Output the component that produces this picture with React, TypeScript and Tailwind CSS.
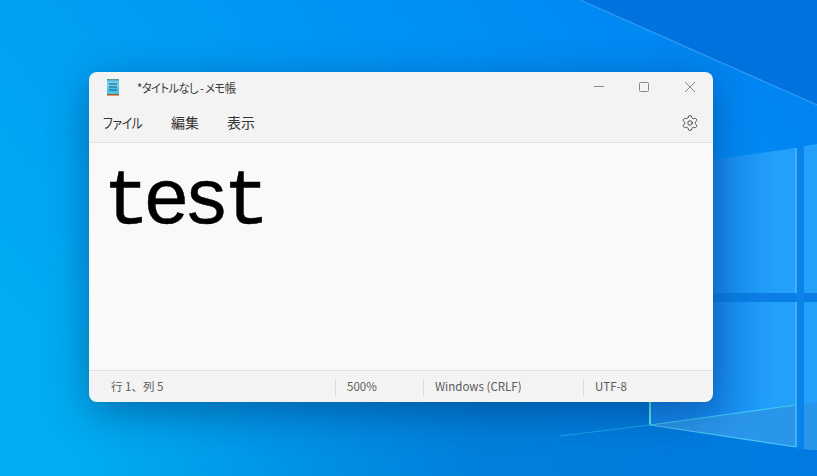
import { Settings } from "lucide-react";

const jp = "font-['Noto_Sans_CJK_JP','Noto_Sans',sans-serif]";

function Wallpaper() {
  return (
    <svg className="absolute inset-0" width="817" height="476" viewBox="0 0 817 476">
      <defs>
        <linearGradient id="bg" x1="0" y1="0.6" x2="1" y2="0.1">
          <stop offset="0" stopColor="#00acf2" />
          <stop offset="0.55" stopColor="#0094f5" />
          <stop offset="1" stopColor="#0082f2" />
        </linearGradient>
        <linearGradient id="lower" x1="0" y1="0" x2="1" y2="0">
          <stop offset="0.1" stopColor="#0078d0" stopOpacity="0" />
          <stop offset="0.6" stopColor="#0078d4" stopOpacity="0.8" />
          <stop offset="1" stopColor="#0078e0" stopOpacity="0.9" />
        </linearGradient>
        <linearGradient id="pane" gradientUnits="userSpaceOnUse" x1="713" y1="0" x2="775" y2="0">
          <stop offset="0" stopColor="#1488ee" />
          <stop offset="1" stopColor="#22a0fa" />
        </linearGradient>
      </defs>
      <rect width="817" height="476" fill="url(#bg)" />
      <polygon points="580,0 817,0 817,105" fill="#0073e0" />
      <line x1="580" y1="0" x2="817" y2="105" stroke="#2f9cf5" strokeWidth="1.2" />
      <rect y="402" width="817" height="74" fill="url(#lower)" />
      {/* window logo panes */}
      <rect x="600" y="293" width="217" height="9" fill="#0a7ee4" />
      <rect x="796" y="148" width="8" height="301" fill="#0a84ea" />
      <polygon points="600,176 796,148 796,293 600,293" fill="url(#pane)" />
      <polygon points="804,146 817,144 817,293 804,293" fill="#22a0fa" />
      <polygon points="650,302 796,302 796,447 650,425" fill="url(#pane)" />
      <polygon points="804,302 817,302 817,450 804,449" fill="#22a0fa" />
      <polygon points="650,425 796,405 796,447" fill="#2a96ea" />
      <polygon points="804,404 817,402 817,450 804,449" fill="#2a96ea" />
      <line x1="796" y1="148" x2="796" y2="293" stroke="#4fbdfb" strokeWidth="1.5" />
      <line x1="796" y1="302" x2="796" y2="447" stroke="#4fbdfb" strokeWidth="1.5" />
      <line x1="650" y1="400" x2="650" y2="425" stroke="#5ff0e0" strokeWidth="2" />
      <line x1="650" y1="425" x2="796" y2="447" stroke="#4cc4f2" strokeWidth="1.2" />
      <line x1="650" y1="425" x2="796" y2="405" stroke="#3fc8ee" strokeWidth="1.2" />
      <line x1="560" y1="436" x2="650" y2="425" stroke="#1ea4ec" strokeWidth="1" />
    </svg>
  );
}

function NotepadIcon() {
  return (
    <svg width="14" height="18" viewBox="0 0 14 18">
      <rect x="1" y="1.5" width="12" height="15" fill="#4cc2e6" />
      <rect x="1" y="1.5" width="12" height="8" fill="#6fd0ee" />
      <path d="M2 1v1.5M4 1v1.5M6 1v1.5M8 1v1.5M10 1v1.5M12 1v1.5" stroke="#35505f" strokeWidth="1" />
      <path d="M3 6h8M3 9h8M3 12h8" stroke="#0f5f80" strokeWidth="1" />
      <rect x="1" y="16" width="12" height="1.5" fill="#b8500f" />
    </svg>
  );
}

function StatusCell({ className, children }: { className: string; children: React.ReactNode }) {
  return (
    <div className={`flex h-[17px] items-center border-l border-[#dcdcdc] pl-[11px] ${className}`}>
      {children}
    </div>
  );
}

export default function App() {
  return (
    <div className="relative h-[476px] w-[817px] overflow-hidden">
      <Wallpaper />

      <div className="relative pl-[89px] pt-[72px]">
        <div className={`flex h-[330px] w-[624px] flex-col overflow-hidden rounded-[8px] bg-[#f3f3f3] shadow-[0_10px_40px_rgba(0,30,80,0.42)] ${jp}`}>
          {/* Title bar */}
          <div className="flex h-[32px] items-center pb-[3px] pl-[17px]">
            <NotepadIcon />
            <span className="ml-[17px] origin-left translate-y-px scale-x-[0.94] text-[12px] tracking-[-0.6px] whitespace-nowrap text-[#3c3c3c] [font-feature-settings:'palt']">
              *タイトルなし - メモ帳
            </span>
            <div className="ml-auto flex items-center">
              <div className="h-px w-[10px] bg-[#8a8a8a]" />
              <div className="ml-[35px] h-[10px] w-[10px] rounded-[1.5px] border border-[#8a8a8a]" />
              <svg className="ml-[36px] mr-[18px]" width="10" height="10" viewBox="0 0 10 10">
                <path d="M0 0l10 10M10 0L0 10" stroke="#8a8a8a" strokeWidth="1" />
              </svg>
            </div>
          </div>

          {/* Menu bar */}
          <div className="flex h-[39px] items-center border-b border-[#e2e2e2] pb-px pl-[14px] pr-[14px] text-[14px] text-[#333333]">
            <span className="w-[39px] origin-left scale-x-[0.85] tracking-[-0.6px] whitespace-nowrap [font-feature-settings:'palt']">ファイル</span>
            <span className="ml-[29px]">編集</span>
            <span className="ml-[28px]">表示</span>
            <Settings className="ml-auto" size={18} strokeWidth={1} color="#222222" />
          </div>

          {/* Editor */}
          <div className="min-h-0 flex-1 bg-[#f9f9f9] pl-[14px] pt-[14px]">
            <div className="font-['Liberation_Mono',monospace] text-[78px] leading-[90px] tracking-[-6.8px] text-black [-webkit-text-stroke:0.5px_black]">
              test
            </div>
          </div>

          {/* Status bar */}
          <div className="flex h-[32px] items-center border-t border-[#e2e2e2] pl-[22px] pt-px text-[11.5px] text-[#5c5c5c]">
            <div className="w-[224px]">行 1、列 5</div>
            <StatusCell className="w-[88px]">500%</StatusCell>
            <StatusCell className="w-[160px]">Windows (CRLF)</StatusCell>
            <StatusCell className="w-[100px]">UTF-8</StatusCell>
          </div>
        </div>
      </div>
    </div>
  );
}
